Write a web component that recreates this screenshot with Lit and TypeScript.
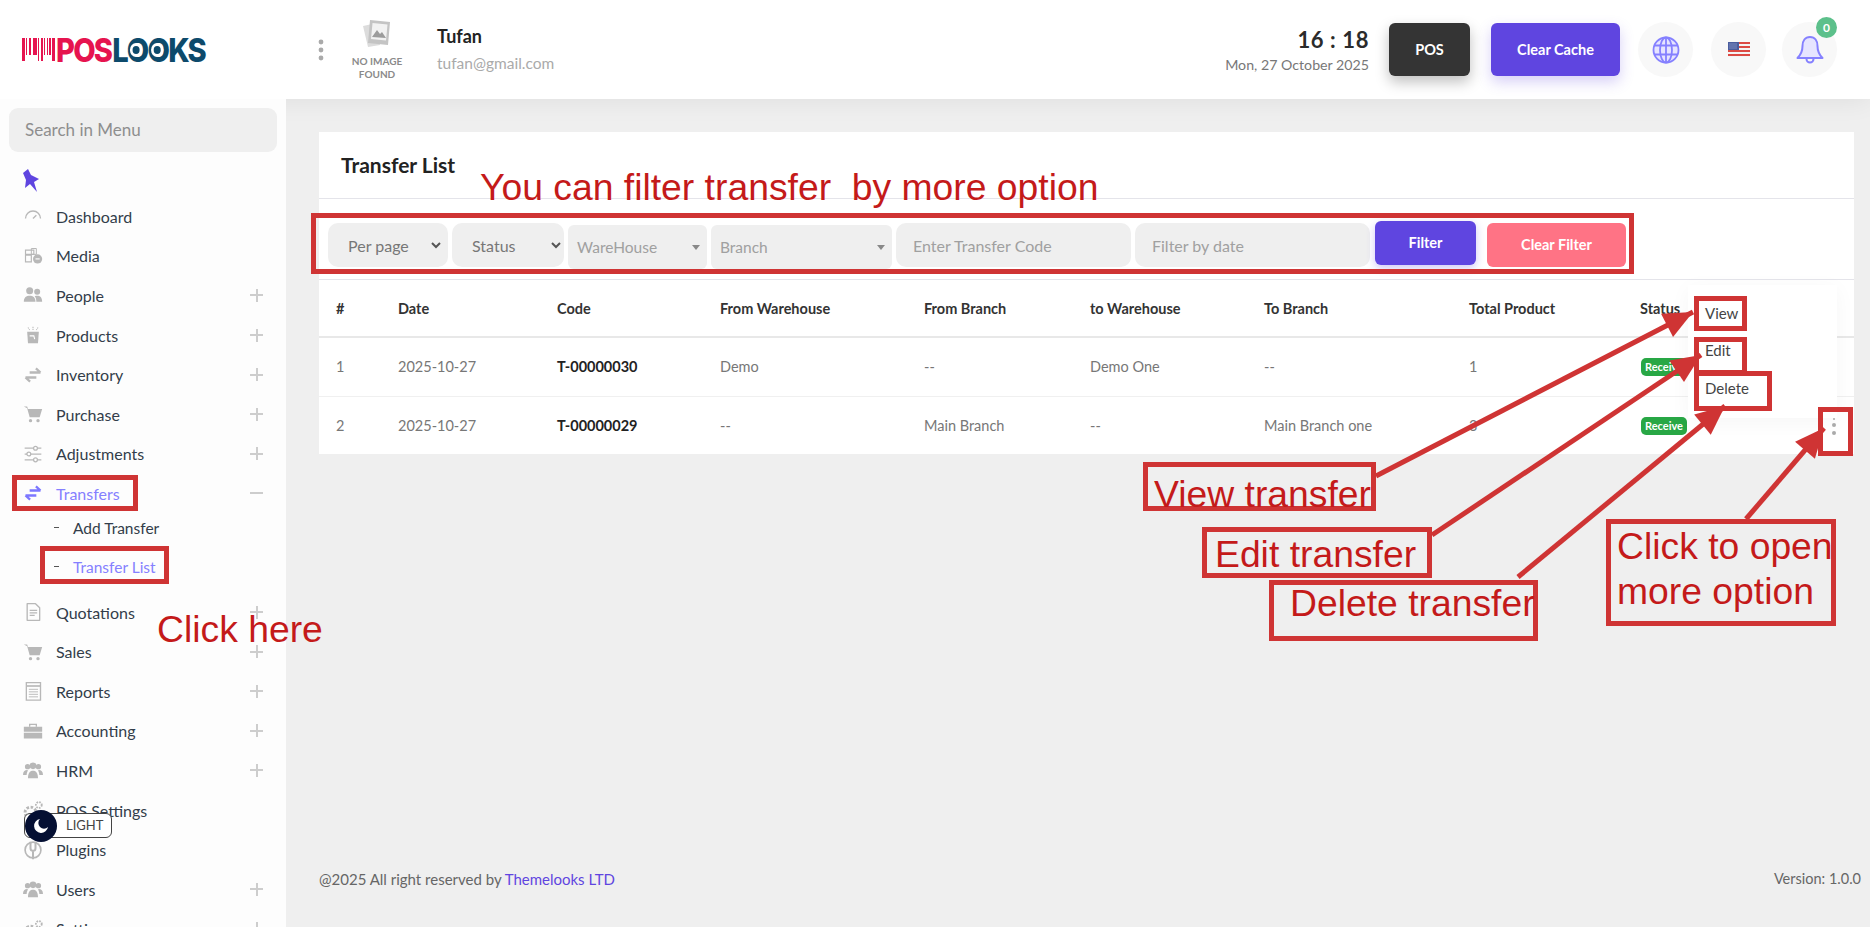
import { css, html, LitElement, svg } from "lit";
import { customElement } from "lit/decorators.js";

const icons: Record<string, unknown> = {
  gauge: svg`<path d="M3 15a9 9 0 0 1 18 0" fill="none" stroke="currentColor" stroke-width="1.6"/><path d="M12 15l4-4" stroke="currentColor" stroke-width="1.6"/>`,
  media: svg`<path d="M3 5h10v5H3zM3 11h7v8H3z" fill="none" stroke="currentColor" stroke-width="1.4"/><path d="M10 3h6v7h-6z" fill="none" stroke="currentColor" stroke-width="1.2"/><circle cx="17.5" cy="15.5" r="5.5" fill="currentColor"/><path d="M15 15.5h5" stroke="#fff" stroke-width="1.4"/>`,
  people: svg`<circle cx="8" cy="7" r="4.2" fill="currentColor"/><circle cx="17" cy="8" r="3.6" fill="currentColor"/><path d="M1 20c0-5 3-7 7-7s7 2 7 7zM16 20c0-3-.7-5-2-6.5 1-.5 2-.5 3-.5 3.5 0 6 2 6 7z" fill="currentColor"/>`,
  bag: svg`<path d="M5 8h14l-1 14H6z" fill="currentColor"/><path d="M6 3l2 3M12 2v4M18 3l-2 3" stroke="currentColor" stroke-width="1.3" stroke-dasharray="1.5 1"/><path d="M8 13h5l1 4" fill="none" stroke="#fff" stroke-width="1.3"/>`,
  swap: svg`<path d="M8 9h13M15.5 4l5.5 5M16 15H3M8.5 20L3 15" fill="none" stroke="currentColor" stroke-width="2.8"/>`,
  cart: svg`<path d="M1 3h4l1 3h17l-3 10H8L5 5" fill="currentColor"/><circle cx="9" cy="20" r="2" fill="currentColor"/><circle cx="18" cy="20" r="2" fill="currentColor"/>`,
  sliders: svg`<path d="M2 5h20M2 12h20M2 19h20" stroke="currentColor" stroke-width="1.5"/><circle cx="15" cy="5" r="2.3" fill="#fff" stroke="currentColor" stroke-width="1.5"/><circle cx="7" cy="12" r="2.3" fill="#fff" stroke="currentColor" stroke-width="1.5"/><circle cx="15" cy="19" r="2.3" fill="#fff" stroke="currentColor" stroke-width="1.5"/>`,
  doc: svg`<path d="M5 2h10l5 5v15H5z" fill="none" stroke="currentColor" stroke-width="1.6" stroke-linejoin="round"/><path d="M8 10h9M8 13h9M8 16h6" stroke="currentColor" stroke-width="1.3"/>`,
  report: svg`<path d="M4 2h17v21H4z" fill="none" stroke="currentColor" stroke-width="1.6"/><path d="M4 6h17" stroke="currentColor" stroke-width="2"/><path d="M7 10h11M7 13h11M7 16h11M7 19h11" stroke="currentColor" stroke-width="1.1"/>`,
  case: svg`<path d="M8 7V4h8v3" fill="none" stroke="currentColor" stroke-width="1.6"/><path d="M1 7h22v6H1zM1 14h22v7H1z" fill="currentColor"/>`,
  group: svg`<circle cx="5.5" cy="8" r="3.2" fill="currentColor"/><circle cx="18.5" cy="8" r="3.2" fill="currentColor"/><circle cx="12" cy="7" r="4" fill="currentColor"/><path d="M6 22c0-6 2-9 6-9s6 3 6 9zM0 18c0-4 2-6 5-6l1 .5c-1 1.5-1.6 3.5-1.6 5.5zM24 18c0-4-2-6-5-6l-1 .5c1 1.5 1.6 3.5 1.6 5.5z" fill="currentColor"/>`,
  gear: svg`<circle cx="9" cy="15" r="6.5" fill="none" stroke="currentColor" stroke-width="3.5" stroke-dasharray="3 2"/><circle cx="19" cy="6" r="3.5" fill="none" stroke="currentColor" stroke-width="2.2" stroke-dasharray="2 1.3"/>`,
  plug: svg`<circle cx="12" cy="12" r="9.5" fill="none" stroke="currentColor" stroke-width="2"/><path d="M9 2v8a3 3 0 0 0 6 0V2M12 13v10" fill="none" stroke="currentColor" stroke-width="2.4"/>`,
};

type MenuItem = { label: string; icon: string; more?: boolean; active?: boolean };

const menu: MenuItem[] = [
  { label: "Dashboard", icon: "gauge" },
  { label: "Media", icon: "media" },
  { label: "People", icon: "people", more: true },
  { label: "Products", icon: "bag", more: true },
  { label: "Inventory", icon: "swap", more: true },
  { label: "Purchase", icon: "cart", more: true },
  { label: "Adjustments", icon: "sliders", more: true },
  { label: "Transfers", icon: "swap", more: true, active: true },
  { label: "Quotations", icon: "doc", more: true },
  { label: "Sales", icon: "cart", more: true },
  { label: "Reports", icon: "report", more: true },
  { label: "Accounting", icon: "case", more: true },
  { label: "HRM", icon: "group", more: true },
  { label: "POS Settings", icon: "gear" },
  { label: "Plugins", icon: "plug" },
  { label: "Users", icon: "group", more: true },
  { label: "Settings", icon: "gear", more: true },
];

const columns = ["#", "Date", "Code", "From Warehouse", "From Branch", "to Warehouse", "To Branch", "Total Product", "Status"];

const rows = [
  ["1", "2025-10-27", "T-00000030", "Demo", "--", "Demo One", "--", "1"],
  ["2", "2025-10-27", "T-00000029", "--", "Main Branch", "--", "Main Branch one", "3"],
];

// annotation layer: painted on top of the screenshot, so free coordinates
const boxes = [
  [311, 213, 1323, 61],
  [12, 475, 126, 36],
  [40, 546, 129, 38],
  [1694, 296, 53, 35],
  [1694, 337, 53, 38],
  [1694, 371, 78, 40],
  [1818, 407, 35, 49],
  [1143, 462, 233, 49],
  [1202, 527, 230, 51],
  [1269, 580, 269, 61],
  [1606, 519, 230, 107],
];

const notes: [number, number, string][] = [
  [480, 169, "You can filter transfer  by more option"],
  [157, 611, "Click here"],
  [1154, 476, "View transfer"],
  [1215, 536, "Edit transfer"],
  [1290, 585, "Delete transfer"],
  [1617, 528, "Click to open"],
  [1617, 573, "more option"],
];

const arrows = [
  [1376, 476, 1693, 312],
  [1432, 535, 1701, 355],
  [1518, 577, 1725, 406],
  [1746, 519, 1824, 428],
];

function arrowHead(x1: number, y1: number, x2: number, y2: number) {
  const a = Math.atan2(y2 - y1, x2 - x1);
  const len = 32;
  const spread = 0.42;
  const p1 = [x2 - len * Math.cos(a - spread), y2 - len * Math.sin(a - spread)];
  const p2 = [x2 - len * Math.cos(a + spread), y2 - len * Math.sin(a + spread)];
  return `${x2},${y2} ${p1[0]},${p1[1]} ${p2[0]},${p2[1]}`;
}

@customElement("app-root")
export class AppRoot extends LitElement {
  static override styles = css`
    :host {
      display: block;
      position: relative;
      height: 927px;
      overflow: hidden;
      background: #efefef;
      font-family: "Lato", "Open Sans", sans-serif;
      font-size: 15px;
      color: #333;
    }

    header {
      height: 99px;
      background: #fff;
      display: flex;
      align-items: center;
      padding-right: 33px;
      box-shadow: 0 2px 24px rgba(0, 0, 0, 0.07);
      position: relative;
      z-index: 1;
    }
    .logo {
      width: 321px;
      padding-left: 22px;
      box-sizing: border-box;
      display: flex;
      align-items: center;
      height: 30px;
      flex: none;
    }
    .logo svg { margin-right: 1px; flex: none; }
    .wordmark {
      display: inline-block;
      white-space: nowrap;
      transform: scaleX(0.88);
      transform-origin: left center;
      font-family: "Inter", sans-serif;
      font-weight: 800;
      font-size: 33px;
      letter-spacing: -2px;
      line-height: 30px;
    }
    .pos { color: #e6144f; }
    .looks { color: #0d4a6b; margin-left: 1px; }
    .o { position: relative; display: inline-block; }
    .o::after {
      content: "";
      position: absolute;
      left: 50%;
      top: 50%;
      width: 8px;
      height: 8px;
      margin: -4px 0 0 -5px;
      border-radius: 50%;
      background: #0d4a6b;
      box-shadow: 0 0 0 3px #fff;
    }
    .vdots { color: #aaa; flex: none; width: 32px; margin-left: -3px; display: flex; }
    .noimg {
      width: 54px;
      flex: none;
      text-align: center;
      font-size: 10px;
      line-height: 13px;
      font-weight: 700;
      color: #8a8a8a;
      margin-right: 33px;
      white-space: nowrap;
    }
    .noimg svg { display: block; margin: 0 auto 5px; }
    .user { margin-top: -2px; }
    .user b { display: block; font-size: 18px; color: #222; line-height: 24px; margin-bottom: 5px; }
    .user span { color: #aaa; font-size: 15.5px; line-height: 20px; }
    .clock { margin-left: auto; text-align: right; margin-right: 20px; }
    .clock b { display: block; font-size: 22px; line-height: 30px; color: #2b2b2b; letter-spacing: 0.6px; }
    .clock span { color: #777; font-size: 14.2px; line-height: 20px; }
    .hbtn {
      height: 53px;
      border-radius: 6px;
      display: flex;
      align-items: center;
      justify-content: center;
      color: #fff;
      font-weight: 700;
      font-size: 14.5px;
      flex: none;
    }
    .hbtn.dark { width: 81px; background: #343434; box-shadow: 0 6px 14px rgba(0, 0, 0, 0.25); margin-right: 21px; }
    .hbtn.violet { width: 129px; background: #5f45e0; box-shadow: 0 6px 14px rgba(95, 69, 224, 0.25); margin-right: 18px; }
    .round {
      width: 55px;
      height: 55px;
      border-radius: 50%;
      background: #f8f8f8;
      display: flex;
      align-items: center;
      justify-content: center;
      position: relative;
      flex: none;
      margin-right: 18px;
    }
    .round.tight { margin-right: 16px; }
    .round:last-child { margin-right: 0; }
    .count {
      position: absolute;
      right: 0;
      top: -5px;
      width: 21px;
      height: 21px;
      border-radius: 50%;
      background: #5cc08b;
      color: #fff;
      font-size: 12px;
      font-weight: 700;
      text-align: center;
      line-height: 21px;
    }

    .body { display: flex; height: 828px; }
    nav {
      width: 286px;
      flex: none;
      background: #fdfdfd;
      padding: 9px 9px 0;
      box-sizing: border-box;
      position: relative;
      z-index: 2;
      overflow: hidden;
    }
    .search {
      height: 44px;
      border-radius: 9px;
      background: #efefef;
      color: #8e8e8e;
      font-size: 17px;
      display: flex;
      align-items: center;
      padding-left: 16px;
      padding-bottom: 2px;
      box-sizing: border-box;
    }
    .pin {
      height: 44.5px;
      box-sizing: border-box;
      padding: 17px 0 0 13px;
      color: #5f45e0;
    }
    .pin svg { display: block; }
    .item {
      height: 39.6px;
      display: flex;
      align-items: center;
      font-size: 16px;
      color: #333d4a;
    }
    .item .ic { width: 47px; flex: none; display: flex; padding-left: 14px; box-sizing: border-box; color: #b8b8b8; }
    .item .ic svg { width: 20px; height: 20px; }
    .item span { flex: 1; }
    .item.active { color: #8580ff; }
    .item.active .ic { color: #7c77ff; }
    .item i { position: relative; width: 13px; height: 13px; margin-right: 14px; flex: none; }
    .item i::before {
      content: "";
      position: absolute;
      left: 0;
      right: 0;
      top: 5.5px;
      height: 2px;
      background: #cdcdcd;
    }
    .item i.plus::after {
      content: "";
      position: absolute;
      top: 0;
      bottom: 0;
      left: 5.5px;
      width: 2px;
      background: #cdcdcd;
    }
    .subs { margin: -5px 0 6px; }
    .sub {
      height: 39px;
      display: flex;
      align-items: center;
      padding-left: 45px;
      font-size: 15.5px;
      color: #333d4a;
    }
    .sub::before { content: ""; width: 5px; height: 1px; background: #555; margin-right: 14px; }
    .sub.active { color: #8580ff; }

    main { flex: 1; display: flex; flex-direction: column; min-width: 0; padding-top: 33px; box-sizing: border-box; }
    .card { background: #fff; margin: 0 16px 0 33px; height: 322px; }
    .title {
      height: 67px;
      box-sizing: border-box;
      border-bottom: 1px solid #e4e4ea;
      padding: 0 0 2px 22px;
      display: flex;
      align-items: center;
      font-size: 21px;
      font-weight: 700;
      color: #222;
    }
    .filters {
      display: flex;
      height: 81px;
      box-sizing: border-box;
      border-bottom: 1px solid #e4e4ea;
      padding: 24px 0 0 9px;
      gap: 4px;
    }
    .field {
      height: 44px;
      background: #efefef;
      border-radius: 10px;
      display: flex;
      align-items: center;
      justify-content: space-between;
      box-sizing: border-box;
      font-size: 16px;
      color: #777;
      flex: none;
    }
    .field.perpage { width: 120px; padding: 0 7px 0 20px; }
    .field.status { width: 112px; padding: 0 3px 0 20px; }
    .field.drop { margin-top: 2px; border-radius: 6px; color: #a0a0a0; padding: 0 7px 0 9px; font-size: 15.5px; }
    .field.wh { width: 139px; }
    .field.br { width: 181px; }
    .field.text { width: 235px; padding-left: 17px; color: #a0a0a0; }
    .tri { width: 0; height: 0; border: 4px solid transparent; border-top: 5px solid #888; border-bottom: 0; }
    .fbtn {
      flex: none;
      display: flex;
      align-items: center;
      justify-content: center;
      color: #fff;
      font-weight: 700;
      font-size: 14.5px;
      border-radius: 6px;
      padding-bottom: 2px;
      box-sizing: border-box;
    }
    .fbtn.go { width: 101px; height: 44px; margin: -2px 0 0 1px; background: #5f45e0; box-shadow: 0 3px 8px rgba(95, 69, 224, 0.3); }
    .fbtn.clear { width: 139px; height: 44px; margin-left: 7px; background: #ff7385; }

    .row {
      display: grid;
      grid-template-columns: 62px 159px 163px 204px 166px 174px 205px 171px 1fr;
      padding-left: 17px;
      align-items: center;
      font-size: 14.5px;
      color: #777;
      box-sizing: border-box;
    }
    .row.head { height: 58px; border-bottom: 2px solid #e8e8e8; font-weight: 700; color: #333; }
    .row.data { height: 59px; border-bottom: 1px solid #f0f0f0; padding-bottom: 2px; }
    .row.data:last-child { border-bottom: 0; height: 57px; padding-bottom: 0; }
    .row b { color: #222; }
    .badge {
      display: inline-block;
      background: #28a745;
      color: #fff;
      font-size: 11px;
      font-weight: 700;
      line-height: 18px;
      width: 46px;
      text-align: center;
      border-radius: 5px;
      margin-left: 1px;
    }

    .menu {
      position: absolute;
      left: 1688px;
      top: 285px;
      width: 149px;
      height: 133px;
      background: #fff;
      box-shadow: 0 4px 20px rgba(0, 0, 0, 0.04);
      font-size: 15px;
      color: #444;
    }
    .menu div { position: absolute; left: 17px; line-height: 20px; }
    .kebab { position: absolute; left: 1826px; top: 417px; color: #aaa; display: flex; }

    footer {
      margin-top: auto;
      display: flex;
      justify-content: space-between;
      padding: 0 9px 39px 33px;
      color: #666;
      font-size: 14.5px;
      line-height: 18px;
    }
    footer .copy { font-size: 15px; }
    footer a { color: #5f45e0; }

    .mode {
      position: absolute;
      left: 24px;
      top: 813px;
      width: 88px;
      height: 25px;
      z-index: 3;
      border: 1px solid #444;
      border-radius: 6px;
      background: #fff;
      box-sizing: border-box;
      color: #444;
      font-size: 13px;
      line-height: 23px;
      padding-left: 41px;
    }
    .mode::before {
      content: "";
      position: absolute;
      left: 0;
      top: -4px;
      width: 32px;
      height: 32px;
      border-radius: 50%;
      background: #051033;
    }
    .mode svg { position: absolute; left: 8px; top: 4px; }

    .ann { position: absolute; inset: 0; z-index: 5; pointer-events: none; }
    .ann svg { position: absolute; inset: 0; }
    .box { position: absolute; border: 5px solid #cf3434; box-sizing: border-box; }
    .note {
      position: absolute;
      font-family: "Liberation Sans", Arial, sans-serif;
      font-size: 37.3px;
      line-height: 37px;
      color: #c41a1a;
      white-space: pre;
    }
  `;

  private _menuItem(m: MenuItem) {
    return html`
      <div class="item ${m.active ? "active" : ""}">
        <div class="ic"><svg viewBox="0 0 24 24">${icons[m.icon]}</svg></div>
        <span>${m.label}</span>
        ${m.more ? html`<i class=${m.active ? "minus" : "plus"}></i>` : ""}
      </div>
      ${m.active
        ? html`<div class="subs">
            <div class="sub">Add Transfer</div>
            <div class="sub active">Transfer List</div>
          </div>`
        : ""}
    `;
  }

  private _logo() {
    const bars = [[0, 3], [4, 1], [7, 2], [11, 4], [16, 1], [19, 2], [22, 1], [25, 1], [27, 2], [30, 3]];
    return html`<svg width="33" height="24" viewBox="0 0 33 24">
      ${bars.map(([x, w], i) =>
        svg`<rect x=${x} y="0" width=${w} height=${i === 4 || i === 5 ? 23 : 17} fill="#e6144f"></rect>`,
      )}
      <rect x="0" y="17" width="3" height="6" fill="#e6144f"></rect>
      <rect x="30" y="17" width="3" height="6" fill="#e6144f"></rect>
    </svg>`;
  }

  private _dots() {
    return html`<svg width="6" height="22" viewBox="0 0 6 22" fill="currentColor">
      <circle cx="3" cy="3" r="2.4"></circle>
      <circle cx="3" cy="11" r="2.4"></circle>
      <circle cx="3" cy="19" r="2.4"></circle>
    </svg>`;
  }

  override render() {
    return html`
      <header>
        <div class="logo">
          ${this._logo()}
          <span class="wordmark"><span class="pos">POS</span><span class="looks">L<span class="o">O</span><span class="o">O</span>KS</span></span>
        </div>
        <div class="vdots">${this._dots()}</div>
        <div class="noimg">
          <svg width="30" height="32" viewBox="0 0 30 32">
            <path d="M1 8l14-3 3 22-12 2z" fill="#dcdcdc"></path>
            <path d="M8 2l20 2-2 23-20-2z" fill="#c4c4c4"></path>
            <path d="M10.5 5l15 1.5-1.5 16-15-1.5z" fill="#f2f2f2"></path>
            <path d="M10 19l5-7 3 4 2-2 4 6z" fill="#9c9c9c"></path>
          </svg>
          NO IMAGE<br />FOUND
        </div>
        <div class="user"><b>Tufan</b><span>tufan@gmail.com</span></div>
        <div class="clock"><b>16 : 18</b><span>Mon, 27 October 2025</span></div>
        <div class="hbtn dark">POS</div>
        <div class="hbtn violet">Clear Cache</div>
        <div class="round">
          <svg width="28" height="28" viewBox="0 0 28 28" fill="#e6e4ff" stroke="#8580ff" stroke-width="1.8">
            <circle cx="14" cy="14" r="12.5"></circle>
            <ellipse cx="14" cy="14" rx="6" ry="12.5"></ellipse>
            <path d="M14 1.5v25M2.5 9.5h23M2.5 18.5h23" fill="none"></path>
          </svg>
        </div>
        <div class="round tight">
          <svg width="22" height="15" viewBox="0 0 22 15">
            <rect width="22" height="15" fill="#f4f4f4"></rect>
            <path d="M0 1h22M0 5h22M0 9h22M0 13h22" stroke="#dc4a44" stroke-width="2"></path>
            <rect width="11" height="8" fill="#4a5d9e"></rect>
            <path d="M1.5 2h8M1.5 4h8M1.5 6h8" stroke="#c7d0ef" stroke-width="0.8" stroke-dasharray="1 1"></path>
          </svg>
        </div>
        <div class="round">
          <svg width="28" height="32" viewBox="0 0 28 32" fill="#e6e4ff" stroke="#8580ff" stroke-width="2" stroke-linejoin="round">
            <path d="M14 3c-5 0-7.5 4-7.5 9 0 6-2 9-5 12h25c-3-3-5-6-5-12 0-5-2.5-9-7.5-9z"></path>
            <path d="M10.5 25a3.5 3.5 0 0 0 7 0" fill="none"></path>
          </svg>
          <div class="count">0</div>
        </div>
      </header>

      <div class="body">
        <nav>
          <div class="search">Search in Menu</div>
          <div class="pin">
            <svg width="18" height="23" viewBox="0 0 18 23" fill="currentColor">
              <path d="M6 0L1 4l3 7-1 8 5-4 7 8-3-10 5-3-8-4z"></path>
            </svg>
          </div>
          ${menu.map((m) => this._menuItem(m))}
        </nav>
        <main>
          <section class="card">
            <div class="title">Transfer List</div>
            <div class="filters">
              <div class="field perpage">Per page
                <svg width="10" height="7" viewBox="0 0 10 7" fill="none" stroke="#555" stroke-width="2"><path d="M1 1l4 4 4-4"></path></svg>
              </div>
              <div class="field status">Status
                <svg width="10" height="7" viewBox="0 0 10 7" fill="none" stroke="#555" stroke-width="2"><path d="M1 1l4 4 4-4"></path></svg>
              </div>
              <div class="field drop wh">WareHouse<span class="tri"></span></div>
              <div class="field drop br">Branch<span class="tri"></span></div>
              <div class="field text">Enter Transfer Code</div>
              <div class="field text">Filter by date</div>
              <div class="fbtn go">Filter</div>
              <div class="fbtn clear">Clear Filter</div>
            </div>
            <div class="row head">${columns.map((c) => html`<div>${c}</div>`)}</div>
            ${rows.map(
              (r) => html`<div class="row data">
                ${r.map((v, i) => (i === 2 ? html`<b>${v}</b>` : html`<div>${v}</div>`))}
                <div><span class="badge">Receive</span></div>
              </div>`,
            )}
          </section>
          <footer>
            <div class="copy">@2025 All right reserved by <a>Themelooks LTD</a></div>
            <div>Version: 1.0.0</div>
          </footer>
        </main>
      </div>

      <div class="menu">
        <div style="top:18px">View</div>
        <div style="top:55px">Edit</div>
        <div style="top:93px">Delete</div>
      </div>
      <div class="kebab">
        <svg width="16" height="20" viewBox="0 0 16 20" fill="currentColor">
          <circle cx="8" cy="2" r="1"></circle>
          <circle cx="8" cy="8" r="2"></circle>
          <circle cx="8" cy="16" r="2"></circle>
        </svg>
      </div>

      <div class="mode">
        <svg width="16" height="16" viewBox="0 0 16 16"><path d="M7 1a7 7 0 1 0 8 8 5.5 5.5 0 0 1-8-8z" fill="#fff"></path></svg>
        LIGHT
      </div>

      <div class="ann">
        <svg width="1870" height="927" viewBox="0 0 1870 927">
          ${arrows.map(
            ([x1, y1, x2, y2]) => svg`
              <line x1=${x1} y1=${y1} x2=${x2} y2=${y2} stroke="#cf3434" stroke-width="5"></line>
              <polygon points=${arrowHead(x1, y1, x2, y2)} fill="#cf3434"></polygon>
            `,
          )}
        </svg>
        ${boxes.map(
          ([l, t, w, h]) => html`<div class="box" style="left:${l}px;top:${t}px;width:${w}px;height:${h}px"></div>`,
        )}
        ${notes.map(([l, t, text]) => html`<div class="note" style="left:${l}px;top:${t}px">${text}</div>`)}
      </div>
    `;
  }
}
